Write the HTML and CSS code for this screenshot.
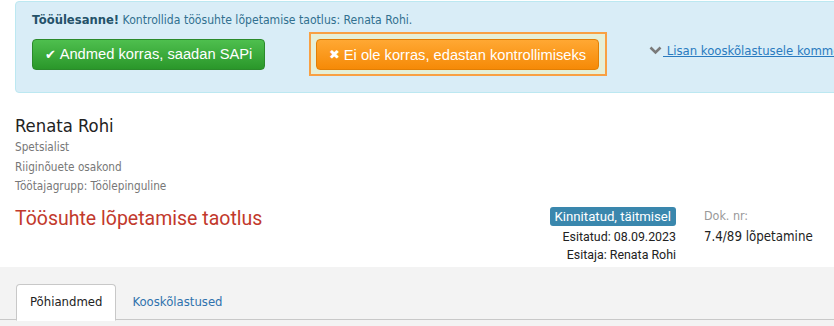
FILE: index.html
```html
<!DOCTYPE html>
<html lang="et">
<head>
<meta charset="utf-8">
<link rel="stylesheet" href="styles.css">
</head>
<body>
<div class="alert">
  <p class="alert-text"><strong>Tööülesanne!</strong> Kontrollida töösuhte lõpetamise taotlus: Renata Rohi.</p>
  <div class="alert-actions">
    <button class="btn btn-success"><span class="ico">✔</span> Andmed korras, saadan SAPi</button>
    <span class="focus-ring"><button class="btn btn-warning"><span class="ico">✖</span> Ei ole korras, edastan kontrollimiseks</button></span>
    <a class="toggle-link" href="#"><svg class="chev" width="13" height="9" viewBox="0 0 13 9"><path d="M1.5 1.5 L6.5 6.5 L11.5 1.5" fill="none" stroke="#7a7a7a" stroke-width="2.6"/></svg><span class="link-text"> Lisan kooskõlastusele kommentaari</span></a>
  </div>
</div>

<div class="person">
  <h2 class="person-name">Renata Rohi</h2>
  <div class="person-line">Spetsialist</div>
  <div class="person-line">Riiginõuete osakond</div>
  <div class="person-line">Töötajagrupp: Töölepinguline</div>
</div>

<div class="doc-head">
  <h1 class="doc-title">Töösuhte lõpetamise taotlus</h1>
  <div class="doc-meta">
    <span class="badge">Kinnitatud, täitmisel</span>
    <div class="meta-line first">Esitatud: 08.09.2023</div>
    <div class="meta-line">Esitaja: Renata Rohi</div>
  </div>
  <div class="doc-nr">
    <div class="nr-label">Dok. nr:</div>
    <div class="nr-value">7.4/89 lõpetamine</div>
  </div>
</div>

<div class="tabs-band">
  <ul class="tabs">
    <li class="tab active">Põhiandmed</li>
    <li class="tab"><a href="#">Kooskõlastused</a></li>
  </ul>
</div>
</body>
</html>
```

FILE: styles.css
```css
html, body {
  margin: 0;
  padding: 0;
  overflow: hidden;
  background: #fff;
}
body {
  font-family: "DejaVu Sans Condensed", "DejaVu Sans", sans-serif;
  font-size: 13px;
  color: #222;
  width: 834px;
  height: 326px;
}
.alert {
  margin: 1px 0 0 15px;
  width: 900px;
  box-sizing: border-box;
  height: 92px;
  background: #d9edf7;
  border: 1px solid #bce8f1;
  border-radius: 4px;
  padding: 9px 16px 0 16px;
  color: #31708f;
}
.alert-text {
  margin: 0;
  font-size: 12.1px;
  line-height: 18px;
  white-space: nowrap;
}
.alert-text strong {
  font-size: 12.9px;
  color: #245269;
}
.alert-actions {
  display: flex;
  align-items: center;
  gap: 44px;
  margin-top: 3px;
  white-space: nowrap;
}
.btn {
  font-family: "Liberation Sans", Arial, sans-serif;
  font-size: 14.7px;
  color: #fff;
  height: 31px;
  border-radius: 4px;
  padding: 0 10px;
  cursor: pointer;
  display: inline-flex;
  align-items: center;
}
.btn .ico {
  font-size: 13px;
  margin-right: 4px;
}
.btn-success {
  width: 233px;
  justify-content: center;
  background: linear-gradient(#4ebf4e, #2a972a);
  border: 1px solid #2b8a2b;
}
.btn-warning {
  width: 283px;
  justify-content: center;
  background: linear-gradient(#ffa833, #f68a07);
  border: 1px solid #e27f05;
}
.focus-ring {
  display: inline-flex;
  border: 2px solid #f9a043;
  background: #e6efd7;
  padding: 5px 6px 4px 5px;
}
.toggle-link {
  display: inline-flex;
  align-items: center;
  color: #2a7bc0;
  font-size: 13px;
  text-decoration: none;
  margin-top: -8px;
  margin-left: -2px;
}
.chev {
  margin-right: 1px;
}
.link-text {
  text-decoration: underline;
  white-space: pre;
}
.person {
  padding: 22px 15px 0;
}
.person-name {
  margin: 0 0 1px;
  font-size: 18.3px;
  font-weight: normal;
  line-height: 22px;
  color: #222;
}
.person-line {
  font-size: 11.7px;
  line-height: 19.5px;
  color: #777;
}
.doc-head {
  display: flex;
  align-items: flex-start;
  padding: 10px 0 0 15px;
  height: 60px;
}
.doc-title {
  flex: 1;
  margin: 0;
  font-family: Roboto, sans-serif;
  font-weight: normal;
  font-size: 19.5px;
  line-height: 24px;
  color: #c2392c;
}
.doc-meta {
  display: flex;
  flex-direction: column;
  align-items: flex-end;
  margin-right: 28px;
}
.badge {
  font-family: Roboto, sans-serif;
  font-size: 13.2px;
  color: #fff;
  background: #3a87ad;
  border-radius: 3px;
  padding: 0 5px;
  line-height: 19px;
}
.meta-line {
  font-family: Roboto, sans-serif;
  font-size: 12.4px;
  line-height: 18px;
  color: #222;
}
.meta-line.first {
  margin-top: 2px;
}
.doc-nr {
  width: 130px;
}
.nr-label {
  font-size: 12.4px;
  color: #999;
  line-height: 18px;
}
.nr-value {
  font-size: 13.2px;
  line-height: 20px;
  color: #222;
  margin-top: 2px;
}
.tabs-band {
  background: #f3f3f3;
  padding: 17px 0 0 16px;
  height: 60px;
  box-sizing: border-box;
}
.tabs {
  list-style: none;
  margin: 0 0 0 -16px;
  padding: 0 0 0 16px;
  display: flex;
  border-bottom: 1px solid #c8c8c8;
  height: 35px;
}
.tab {
  font-size: 13px;
  line-height: 34px;
  padding: 0 13px;
  margin-right: 2px;
  border: 1px solid transparent;
  border-radius: 4px 4px 0 0;
}
.tab.active {
  background: #fff;
  border-color: #c8c8c8;
  border-bottom-color: #fff;
  height: 35px;
  color: #222;
}
.tab a {
  color: #2f72ad;
  text-decoration: none;
}
```
